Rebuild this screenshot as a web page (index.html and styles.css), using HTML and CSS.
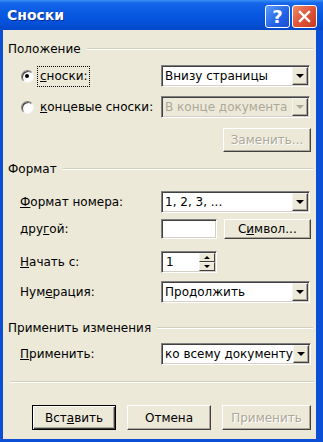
FILE: index.html
```html
<!DOCTYPE html>
<html>
<head>
    <title>Сноски</title>
    <link rel="stylesheet" href="styles.css">
</head>
<body>
    <div class="window">
        <div class="titlebar">
            <span class="title">Сноски</span>
            <div class="title-buttons">
                <span class="tbtn help">?</span>
                <span class="tbtn close">
                    <svg width="13" height="13" viewBox="0 0 13 13">
                        <path d="M2 2 L11 11 M11 2 L2 11" stroke="#fff" stroke-width="2.4" stroke-linecap="square"/>
                    </svg>
                </span>
            </div>
        </div>

        <div class="client">
            <!-- Положение -->
            <div class="group-title"><span>Положение</span><span class="line"></span></div>

            <div class="row row-first-1">
                <div class="label-col">
                    <span class="radio checked"></span>
                    <span class="radio-text focused"><u>с</u>носки:</span>
                </div>
                <div class="select"><span class="value">Внизу страницы</span><span class="arrow"></span></div>
            </div>

            <div class="row row-gap-9">
                <div class="label-col">
                    <span class="radio"></span>
                    <span class="radio-text"><u>к</u>онцевые сноски:</span>
                </div>
                <div class="select disabled"><span class="value">В конце документа</span><span class="arrow"></span></div>
            </div>

            <div class="row row-button">
                <span class="button small disabled">Заменить...</span>
            </div>

            <!-- Формат -->
            <div class="group-title group-2"><span>Формат</span><span class="line"></span></div>

            <div class="row row-first-2">
                <div class="label-col"><span class="label"><u>Ф</u>ормат номера:</span></div>
                <div class="select"><span class="value">1, 2, 3, ...</span><span class="arrow"></span></div>
            </div>

            <div class="row row-gap-5">
                <div class="label-col"><span class="label">дру<u>г</u>ой:</span></div>
                <div class="textbox"></div>
                <span class="button small symbol">С<u>и</u>мвол...</span>
            </div>

            <div class="row row-gap-11">
                <div class="label-col"><span class="label"><u>Н</u>ачать с:</span></div>
                <div class="spin">
                    <span class="value">1</span>
                    <span class="spin-buttons">
                        <span class="spin-btn up"></span>
                        <span class="spin-btn down"></span>
                    </span>
                </div>
            </div>

            <div class="row row-gap-8">
                <div class="label-col"><span class="label">Нум<u>е</u>рация:</span></div>
                <div class="select"><span class="value">Продолжить</span><span class="arrow"></span></div>
            </div>

            <!-- Применить изменения -->
            <div class="group-title group-3"><span>Применить изменения</span><span class="line"></span></div>

            <div class="row row-gap-8">
                <div class="label-col"><span class="label"><u>П</u>рименить:</span></div>
                <div class="select wide"><span class="value">ко всему документу</span><span class="arrow"></span></div>
            </div>

            <div class="separator"></div>

            <div class="dialog-buttons">
                <span class="button default">Вст<u>а</u>вить</span>
                <span class="button">Отмена</span>
                <span class="button apply disabled">Применить</span>
            </div>
        </div>
    </div>
</body>
</html>
```

FILE: styles.css
```css
body {
    margin: 0;
    font-family: "DejaVu Sans", Tahoma, sans-serif;
    font-size: 12px;
    color: #000;
}

.window {
    width: 323px;
    height: 442px;
    background: #0a4fd6;
    display: flex;
    flex-direction: column;
}

/* Title bar */
.titlebar {
    height: 30px;
    flex-shrink: 0;
    display: flex;
    justify-content: space-between;
    padding: 0 6px 0 7px;
    background: linear-gradient(#3b8ff6 0, #1667ea 3px, #0a5ae3 12px, #0654de 20px, #0447c9 30px);
}

.title {
    color: #fff;
    font-weight: bold;
    font-size: 14px;
    line-height: 31px;
    text-shadow: 1px 1px #0a2f8a;
}

.title-buttons {
    display: flex;
    gap: 2px;
    padding-top: 5px;
}

.tbtn {
    width: 25px;
    height: 23px;
    box-sizing: border-box;
    border: 1px solid #fff;
    border-radius: 3px;
    display: flex;
    align-items: center;
    justify-content: center;
}

.tbtn.help {
    background: linear-gradient(135deg, #5a9cf8, #2262e6 60%, #1a4fd0);
    color: #fff;
    font-weight: bold;
    font-size: 18px;
    line-height: 1;
}

.tbtn.close {
    background: linear-gradient(135deg, #f08a6a, #e0553a 50%, #c43b1e);
}

/* Client area */
.client {
    flex: 1;
    margin: 0 7px 3px 3px;
    background: #ece9d8;
    padding: 12px 5px 9px 5px;
}

.group-title {
    height: 14px;
    display: flex;
    align-items: center;
    gap: 6px;
    margin-right: -2px;
    white-space: nowrap;
}

.group-title .line {
    flex: 1;
    border-top: 1px solid #d0d0bf;
    border-bottom: 1px solid #fff;
}

.group-2 {
    margin-top: 10px;
}

.group-3 {
    margin-top: 18px;
}

.row {
    height: 22px;
    display: flex;
    align-items: center;
    padding-left: 12px;
}

.row-first-1 { margin-top: 9px; }
.row-first-2 { margin-top: 15px; }
.row-gap-5 { margin-top: 5px; }
.row-gap-8 { margin-top: 8px; }
.row-gap-9 { margin-top: 9px; }
.row-gap-11 { margin-top: 11px; }

.row-button {
    height: 24px;
    margin-top: 10px;
    justify-content: flex-end;
}

.label-col {
    width: 141px;
    flex-shrink: 0;
    display: flex;
    align-items: center;
    white-space: nowrap;
}

/* Radio buttons */
.radio {
    width: 13px;
    height: 13px;
    box-sizing: border-box;
    margin-left: 1px;
    border-radius: 50%;
    background: #fff;
    border: 1px solid;
    border-color: #808080 #f4f3ee #f4f3ee #808080;
    box-shadow: inset 1px 1px #404040;
    position: relative;
}

.radio.checked::after {
    content: "";
    position: absolute;
    left: 3px;
    top: 3px;
    width: 4px;
    height: 4px;
    border-radius: 50%;
    background: #000;
}

.radio-text {
    margin-left: 3px;
    padding: 2px 2px 3px 2px;
    border: 1px solid transparent;
}

.radio-text.focused {
    border: 1px dotted #000;
}

/* Sunken fields */
.select,
.textbox,
.spin {
    height: 22px;
    box-sizing: border-box;
    background: #fff;
    border: 1px solid;
    border-color: #808080 #fff #fff #808080;
    box-shadow: inset 1px 1px #404040, inset -1px -1px #d4d0c8;
    display: flex;
    align-items: center;
}

.select {
    width: 149px;
    padding: 1px;
}

.select.wide {
    width: 150px;
}

.select .value {
    flex: 1;
    padding-left: 2px;
    white-space: nowrap;
    overflow: hidden;
}

.select .arrow {
    width: 16px;
    height: 18px;
    box-sizing: border-box;
    flex-shrink: 0;
    background: #ece9d8;
    border: 1px solid;
    border-color: #f4f3ee #404040 #404040 #f4f3ee;
    box-shadow: inset -1px -1px #aca899;
    position: relative;
}

.select .arrow::after {
    content: "";
    position: absolute;
    left: 3px;
    top: 6px;
    border-left: 4px solid transparent;
    border-right: 4px solid transparent;
    border-top: 4px solid #000;
}

.select.disabled {
    background: #ece9d8;
    color: #aca899;
}

.select.disabled .arrow::after {
    border-top-color: #aca899;
}

.textbox {
    width: 56px;
    height: 20px;
}

.spin {
    width: 56px;
    padding: 1px;
}

.spin .value {
    flex: 1;
    padding-left: 3px;
}

.spin-buttons {
    width: 16px;
    height: 18px;
    display: flex;
    flex-direction: column;
}

.spin-btn {
    flex: 1;
    box-sizing: border-box;
    background: #ece9d8;
    border: 1px solid;
    border-color: #f4f3ee #404040 #404040 #f4f3ee;
    position: relative;
}

.spin-btn::after {
    content: "";
    position: absolute;
    left: 4px;
    top: 2px;
    border-left: 3px solid transparent;
    border-right: 3px solid transparent;
}

.spin-btn.up::after {
    border-bottom: 3px solid #000;
}

.spin-btn.down::after {
    border-top: 3px solid #000;
}

/* Push buttons */
.button {
    height: 25px;
    width: 85px;
    box-sizing: border-box;
    background: #ece9d8;
    border: 1px solid;
    border-color: #fff #404040 #404040 #fff;
    box-shadow: inset -1px -1px #aca899;
    display: flex;
    align-items: center;
    justify-content: center;
    white-space: nowrap;
}

.button.small {
    width: 88px;
    height: 24px;
}

.button.symbol {
    height: 20px;
    margin-left: 7px;
}

.button.default {
    border: 1px solid #000;
    box-shadow: inset 1px 1px #fff, inset -1px -1px #404040, inset -2px -2px #aca899;
}

.button.apply {
    width: 90px;
}

.button.disabled {
    color: #aca899;
    text-shadow: 1px 1px #fff;
}

.separator {
    margin: 16px -3px 0 2px;
    border-top: 1px solid #d0d0bf;
    border-bottom: 1px solid #fff;
}

.dialog-buttons {
    display: flex;
    gap: 10px;
    margin-top: 22px;
    padding-left: 24px;
}

.dialog-buttons .button + .button {
    margin-left: 1px;
}
```
